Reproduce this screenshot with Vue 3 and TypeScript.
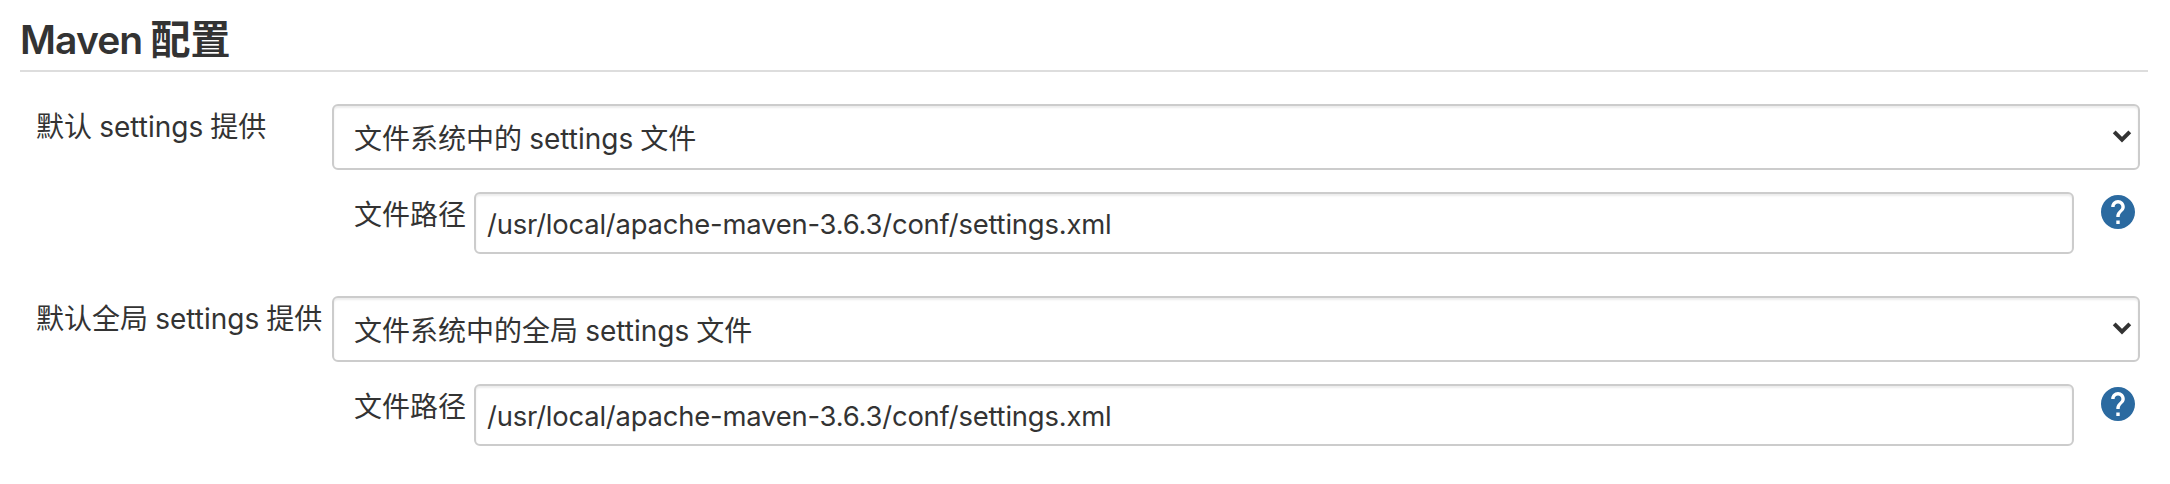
<script setup lang="ts">
import { ref } from 'vue'

interface SettingsEntry {
  id: string
  label: string
  provider: string
  path: string
}

const entries = ref<SettingsEntry[]>([
  {
    id: 'default',
    label: '默认 settings 提供',
    provider: '文件系统中的 settings 文件',
    path: '/usr/local/apache-maven-3.6.3/conf/settings.xml',
  },
  {
    id: 'global',
    label: '默认全局 settings 提供',
    provider: '文件系统中的全局 settings 文件',
    path: '/usr/local/apache-maven-3.6.3/conf/settings.xml',
  },
])
</script>

<template>
  <main class="page">
    <h2 class="title"><span class="latin">Maven </span>配置</h2>
    <section v-for="entry in entries" :key="entry.id" class="entry">
      <label class="label" :for="entry.id">{{ entry.label }}</label>
      <div class="fields">
        <div class="select-wrap">
          <select :id="entry.id" class="control select">
            <option>{{ entry.provider }}</option>
          </select>
          <svg class="chevron" viewBox="0 0 20 14" aria-hidden="true">
            <path d="M2.2 2.9 10 10.7 17.8 2.9" fill="none" stroke="#333" stroke-width="4" />
          </svg>
        </div>
        <div class="path-row">
          <label class="path-label" :for="entry.id + '-path'">文件路径</label>
          <input :id="entry.id + '-path'" v-model="entry.path" class="control input" type="text" spellcheck="false" />
          <svg class="help" viewBox="2 2 20 20" aria-hidden="true">
            <path
              fill="#2b6aa0"
              d="M12 2C6.48 2 2 6.48 2 12s4.48 10 10 10 10-4.48 10-10S17.52 2 12 2zm1 17h-2v-2h2v2zm2.07-7.75l-.9.92C13.45 12.9 13 13.5 13 15h-2v-.5c0-1.1.45-2.1 1.17-2.83l1.24-1.26c.37-.36.59-.86.59-1.41 0-1.1-.9-2-2-2s-2 .9-2 2H8c0-2.21 1.79-4 4-4s4 1.79 4 4c0 .88-.36 1.68-.93 2.25z"
            />
          </svg>
        </div>
      </div>
    </section>
  </main>
</template>

<style>
body {
  margin: 0;
  background: #fff;
}
</style>

<style scoped>
.page {
  box-sizing: border-box;
  height: 484px;
  padding: 0 22px 0 20px;
  overflow: hidden;
  color: #333;
  font: 28px/40px Inter, 'Noto Sans CJK SC', sans-serif;
  word-spacing: -0.7px;
}
.title {
  box-sizing: border-box;
  height: 72px;
  margin: 0 0 32px;
  padding-top: 12px;
  border-bottom: 2px solid #ddd;
  font-size: 40px;
  font-weight: 600;
  line-height: 56px;
}
.latin {
  font-size: 39px;
  letter-spacing: -0.9px;
}
.entry {
  display: flex;
  height: 150px;
  margin-bottom: 42px;
  padding-right: 8px;
}
.label {
  flex: none;
  width: 296px;
  padding: 3px 0 0 16px;
  white-space: nowrap;
}
.fields {
  flex: 1;
}
.select-wrap {
  position: relative;
}
.control {
  display: block;
  box-sizing: border-box;
  margin: 0;
  border: 2px solid #ccc;
  border-radius: 6px;
  outline: none;
  background: #fff;
  box-shadow: inset 0 2px 2px rgba(0, 0, 0, 0.075);
  color: #333;
  font: inherit;
  word-spacing: inherit;
}
.select {
  width: 100%;
  height: 66px;
  padding: 4px 50px 0 20px;
  appearance: none;
}
.chevron {
  position: absolute;
  top: 25px;
  right: 8px;
  width: 20px;
  height: 14px;
}
.path-row {
  display: flex;
  margin-top: 22px;
  padding-left: 22px;
}
.path-label {
  flex: none;
  width: 120px;
  padding-top: 3px;
}
.input {
  flex: 1;
  height: 62px;
  padding: 2px 12px 0 11px;
  font-size: 27.4px;
  letter-spacing: -0.19px;
}
.help {
  flex: none;
  width: 34px;
  height: 34px;
  margin: 3px 5px 0 27px;
}
</style>
